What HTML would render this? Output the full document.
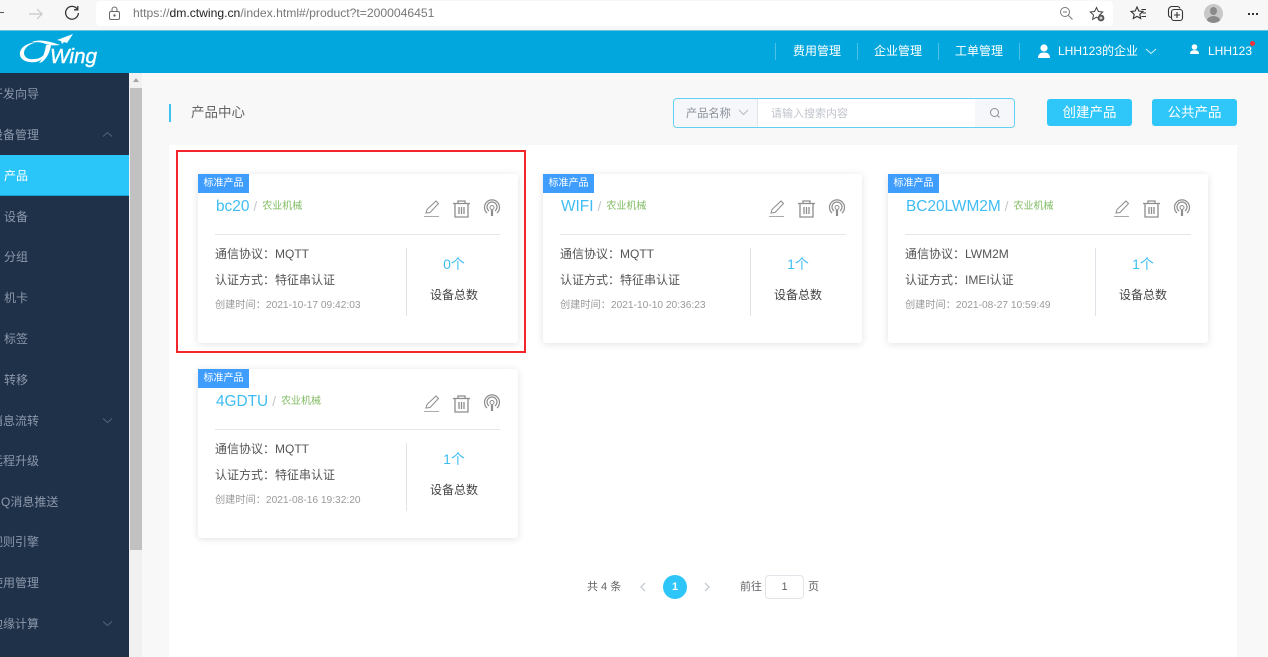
<!DOCTYPE html>
<html><head><meta charset="utf-8"><style>
*{box-sizing:border-box}
html,body{margin:0;padding:0;width:1268px;height:657px;overflow:hidden;background:#f8f8f8;font-family:"Liberation Sans","Noto Sans CJK SC",sans-serif}
.a{position:absolute;white-space:nowrap}
.nav{position:absolute;font-size:12px;color:#8d99ab;line-height:16px;white-space:nowrap}
.hd{position:absolute;top:44px;font-size:12px;line-height:15px;color:#fff;white-space:nowrap}
.sep{position:absolute;top:43px;width:1px;height:17px;background:#4dc0e6}
.card{position:absolute;width:320px;height:169px;background:#fff;border-radius:3px;box-shadow:0 1px 8px rgba(0,0,0,.12)}
.tag{position:absolute;left:0;top:0;width:51px;height:19px;background:#3f9dfd;color:#fff;font-size:10px;line-height:19px;text-align:center}
.ti{position:absolute;left:18px;top:22px;font-size:15.4px;line-height:20px;color:#3fbdf3;white-space:nowrap}
.sl{color:#c4c8cc;margin:0 5px 0 4px;font-size:14px}
.cat{font-size:10px;color:#80bb62;position:relative;top:-2px}
.dv{position:absolute;left:17px;top:60px;width:285px;height:1px;background:#e4e6ea}
.l1,.l2,.l3{position:absolute;left:17px;white-space:nowrap}
.l1{top:72px;font-size:12px;line-height:16px;color:#555}
.l2{top:98px;font-size:12px;line-height:16px;color:#555}
.l3{top:125px;font-size:10.2px;line-height:14px;color:#9a9a9a}
.vl{position:absolute;left:208px;top:74px;width:1px;height:68px;background:#e0e3e8}
.n{position:absolute;left:209px;width:94px;top:82px;text-align:center;font-size:14px;line-height:16px;color:#3fbdf3}
.t{position:absolute;left:209px;width:94px;top:113px;text-align:center;font-size:12px;line-height:16px;color:#444}
.ic{position:absolute;left:225px;top:25px}
</style></head><body>

<!-- browser bar -->
<div class="a" style="left:0;top:0;width:1268px;height:30px;background:#f7f7f7"></div>
<div class="a" style="left:0;top:12px;width:4px;height:1px;background:#555"></div>
<svg class="a" style="left:27px;top:5px" width="18" height="18" fill="none" stroke="#c9c9c9" stroke-width="1.2"><path d="M2 9h13M10 4l5 5-5 5"/></svg>
<svg class="a" style="left:63px;top:4px" width="18" height="18" fill="none" stroke="#333" stroke-width="1.3"><path d="M14.5 5.5A6.4 6.4 0 1 0 15.4 9M14.8 2v3.8H11"/></svg>
<div class="a" style="left:96px;top:1px;width:1017px;height:25px;background:#fff;border-radius:4px"></div>
<svg class="a" style="left:108px;top:6px" width="13" height="15" fill="none" stroke="#666" stroke-width="1"><rect x="1.5" y="5.5" width="10" height="8" rx="1.5"/><path d="M4 5.5V3.5a2.5 2.5 0 0 1 5 0v2"/><circle cx="6.5" cy="9.5" r=".7" fill="#666"/></svg>
<div class="a" style="left:133px;top:6px;font-size:12.15px;line-height:15px;color:#777">https://<span style="color:#222">dm.ctwing.cn</span>/index.html#/product?t=2000046451</div>
<svg class="a" style="left:1059px;top:6px" width="15" height="15" fill="none" stroke="#777" stroke-width="1"><circle cx="6" cy="6" r="4.5"/><path d="M9.5 9.5l4 4M4 6h4"/></svg>
<svg class="a" style="left:1089px;top:6px" width="17" height="17" fill="none" stroke="#444" stroke-width="1"><path d="M7.5 1.5l1.9 4 4.3.5-3.2 3 .8 4.3-3.8-2.1-3.8 2.1.8-4.3-3.2-3 4.3-.5z"/><circle cx="12" cy="12" r="3.4" fill="#555" stroke="none"/><path d="M10.5 12h3M12 10.5v3" stroke="#fff"/></svg>
<svg class="a" style="left:1130px;top:5px" width="17" height="17" fill="none" stroke="#333" stroke-width="1.1"><path d="M7 2l1.800 4 4.200.4-3.200 2.900.9 4.200L7 11.400 3.300 13.500l.9-4.200L1 6.400 5.200 6z"/><path d="M11.500 4.500H16M12.500 8H16M11.500 11.500H16"/></svg>
<svg class="a" style="left:1167px;top:5px" width="18" height="18" fill="none" stroke="#333" stroke-width="1.1"><path d="M4 12.500C2 12 1.500 11 1.500 9.500V5c0-2 1.500-3.500 3.500-3.500h5c1.500 0 2.500.5 3 2"/><rect x="4.500" y="4.500" width="11" height="11" rx="2.500"/><path d="M10 7v6M7 10h6"/></svg>
<div class="a" style="left:1204px;top:4px;width:19px;height:19px;border-radius:50%;background:#c8c8c8;overflow:hidden"><div class="a" style="left:6px;top:3px;width:7px;height:8px;border-radius:50%;background:#8a8a8a"></div><div class="a" style="left:3px;top:12px;width:13px;height:9px;border-radius:50%;background:#8a8a8a"></div></div>
<div class="a" style="left:1248px;top:13px;width:2px;height:2px;background:#333;box-shadow:4px 0 #333,8px 0 #333"></div>

<!-- header -->
<div class="a" style="left:0;top:30px;width:1268px;height:43px;background:#02a8dd;border-top:1px solid #6cc3df"></div>
<svg class="a" style="left:15px;top:30px" width="90" height="42">
<path d="M22 12C10 13 4 19 5 25c1 6 9 8 16 7 5-1 8-5 10-10-3 5-7 7-12 7-6 1-10-2-10-6 0-5 5-9 13-11z" fill="#fff"/>
<path d="M17 12c7-3 17-1 28 3-7 1-12 0-17-2-4-1-8-1-11-1z" fill="#fff"/>
<path d="M31 15h5c-1 7-4 13-9 17l-3 1c4-5 6-11 7-18z" fill="#fff"/>
<path d="M58 4L42 10l4 1 1 3 2-2 3 1z" fill="#fff"/>
<text x="35" y="33" font-family="Liberation Sans" font-style="italic" font-size="20" fill="#fff" stroke="#fff" stroke-width=".4" textLength="47" lengthAdjust="spacingAndGlyphs">Wing</text>
</svg>
<div class="sep" style="left:775px"></div><div class="sep" style="left:857px"></div><div class="sep" style="left:938px"></div><div class="sep" style="left:1019px"></div>
<div class="hd" style="left:793px">费用管理</div>
<div class="hd" style="left:874px">企业管理</div>
<div class="hd" style="left:955px">工单管理</div>
<svg class="a" style="left:1037px;top:44px" width="14" height="15" fill="#fff"><circle cx="7" cy="4" r="3.600"/><path d="M1 14c0-4 2.500-5.500 6-5.500S13 10 13 14z"/></svg>
<div class="hd" style="left:1058px">LHH123的企业</div>
<svg class="a" style="left:1145px;top:48px" width="12" height="7" fill="none" stroke="#d8f1fa" stroke-width="1"><path d="M1 1l5 4.500L11 1"/></svg>
<svg class="a" style="left:1189px;top:44px" width="11" height="11" fill="#fff"><circle cx="5.500" cy="3" r="2.800"/><path d="M1 10c0-3 2-3.700 4.500-3.700S10 7 10 10z"/></svg>
<div class="hd" style="left:1208px">LHH123</div>
<div class="a" style="left:1250px;top:41px;width:5px;height:5px;border-radius:50%;background:#f0313a"></div>

<!-- sidebar -->
<div class="a" style="left:0;top:73px;width:129px;height:584px;background:#1f3049"></div>
<div class="a" style="left:0;top:155px;width:129px;height:41px;background:#2ac6fa;border-bottom:1px solid #1b9fd0"></div>
<div class="nav" style="left:-9px;top:86px">开发向导</div>
<div class="nav" style="left:-9px;top:127px">设备管理</div>
<svg class="a" style="left:102px;top:131px" width="11" height="7" fill="none" stroke="#55627a" stroke-width="1"><path d="M1 5.500L5.500 1.500 10 5.500"/></svg>
<div class="nav" style="left:4px;top:168px;color:#fff">产品</div>
<div class="nav" style="left:4px;top:209px">设备</div>
<div class="nav" style="left:4px;top:249px">分组</div>
<div class="nav" style="left:4px;top:290px">机卡</div>
<div class="nav" style="left:4px;top:331px">标签</div>
<div class="nav" style="left:4px;top:372px">转移</div>
<div class="nav" style="left:-9px;top:413px">消息流转</div>
<svg class="a" style="left:102px;top:417px" width="11" height="7" fill="none" stroke="#55627a" stroke-width="1"><path d="M1 1.500L5.500 5.500 10 1.500"/></svg>
<div class="nav" style="left:-9px;top:453px">远程升级</div>
<div class="nav" style="left:-9px;top:494px">MQ消息推送</div>
<div class="nav" style="left:-9px;top:534px">规则引擎</div>
<div class="nav" style="left:-9px;top:575px">使用管理</div>
<div class="nav" style="left:-9px;top:616px">边缘计算</div>
<svg class="a" style="left:102px;top:620px" width="11" height="7" fill="none" stroke="#55627a" stroke-width="1"><path d="M1 1.500L5.500 5.500 10 1.500"/></svg>

<!-- scrollbar -->
<div class="a" style="left:129px;top:73px;width:13px;height:584px;background:#f1f1f1"></div>
<div class="a" style="left:130px;top:88px;width:12px;height:462px;background:#c1c1c1"></div>
<div class="a" style="left:133px;top:78px;width:0;height:0;border-left:3px solid transparent;border-right:3px solid transparent;border-bottom:4px solid #a3a3a3"></div>

<!-- title row -->
<div class="a" style="left:169px;top:104px;width:2px;height:18px;background:#3cc3f0"></div>
<div class="a" style="left:191px;top:105px;font-size:13.500px;line-height:16px;color:#666">产品中心</div>
<div class="a" style="left:673px;top:98px;width:342px;height:30px;background:#fff;border:1px solid #63cff3;border-radius:4px;overflow:hidden">
 <div class="a" style="left:0;top:0;width:84px;height:28px;background:#f5f7fa;border-right:1px solid #e2e5ea"></div>
 <div class="a" style="left:301px;top:0;width:40px;height:28px;background:#f5f7fa"></div>
 <div class="a" style="left:12px;top:8px;font-size:11.2px;line-height:14px;color:#8a8f99">产品名称</div>
 <svg class="a" style="left:64px;top:10px" width="11" height="7" fill="none" stroke="#b6bac2" stroke-width="1"><path d="M1 1l4.500 4.500L10 1"/></svg>
 <div class="a" style="left:97px;top:8px;font-size:11px;line-height:14px;color:#c0c4cc">请输入搜索内容</div>
 <svg class="a" style="left:315px;top:8px" width="12" height="12" fill="none" stroke="#8b8f96" stroke-width="1"><circle cx="5.500" cy="5.500" r="4"/><path d="M8.500 8.500l2 2"/></svg>
</div>
<div class="a" style="left:1047px;top:99px;width:85px;height:27px;background:#2fc6fa;border-radius:3px;color:#fff;font-size:13.500px;line-height:27px;text-align:center">创建产品</div>
<div class="a" style="left:1152px;top:99px;width:85px;height:27px;background:#2fc6fa;border-radius:3px;color:#fff;font-size:13.500px;line-height:27px;text-align:center">公共产品</div>

<!-- panel -->
<div class="a" style="left:169px;top:145px;width:1068px;height:512px;background:#fff"></div>
<div class="a" style="left:176px;top:150px;width:350px;height:203px;border:2px solid #f2262b"></div>

<!-- cards -->
<div class="card" style="left:198px;top:174px">
 <div class="tag">标准产品</div><div class="ti">bc20<span class="sl">/</span><span class="cat">农业机械</span></div>
 <svg class="ic" width="80" height="22" fill="none" stroke="#8d8d8d" stroke-width="1"><path d="M3 14l1-3.500L13 2l2.500 2.500L7 13.500z"/><path d="M1 17.500h15" stroke="#aaa"/><path d="M30 4.500h17M35 4V2h7v2M32 5v13h13V5M36 8v7M38.500 8v7M41 8v7" stroke-width="1.300"/><path d="M64 14a7.500 7.500 0 1 1 10 0M66 12a5 5 0 1 1 6 0" stroke-width="1.200"/><circle cx="69" cy="8.500" r="2"/><path d="M69 11v6" stroke-width="2.200"/></svg>
 <div class="dv"></div>
 <div class="l1">通信协议：MQTT</div><div class="l2">认证方式：特征串认证</div><div class="l3">创建时间：2021-10-17 09:42:03</div>
 <div class="vl"></div><div class="n">0个</div><div class="t">设备总数</div>
</div>
<div class="card" style="left:543px;top:174px;width:319px">
 <div class="tag">标准产品</div><div class="ti">WIFI<span class="sl">/</span><span class="cat">农业机械</span></div>
 <svg class="ic" width="80" height="22" fill="none" stroke="#8d8d8d" stroke-width="1"><path d="M3 14l1-3.500L13 2l2.500 2.500L7 13.500z"/><path d="M1 17.500h15" stroke="#aaa"/><path d="M30 4.500h17M35 4V2h7v2M32 5v13h13V5M36 8v7M38.500 8v7M41 8v7" stroke-width="1.300"/><path d="M64 14a7.500 7.500 0 1 1 10 0M66 12a5 5 0 1 1 6 0" stroke-width="1.200"/><circle cx="69" cy="8.500" r="2"/><path d="M69 11v6" stroke-width="2.200"/></svg>
 <div class="dv" style="width:286px"></div>
 <div class="l1">通信协议：MQTT</div><div class="l2">认证方式：特征串认证</div><div class="l3">创建时间：2021-10-10 20:36:23</div>
 <div class="vl" style="left:207px"></div><div class="n" style="left:208px">1个</div><div class="t" style="left:208px">设备总数</div>
</div>
<div class="card" style="left:888px;top:174px">
 <div class="tag">标准产品</div><div class="ti">BC20LWM2M<span class="sl">/</span><span class="cat">农业机械</span></div>
 <svg class="ic" width="80" height="22" fill="none" stroke="#8d8d8d" stroke-width="1"><path d="M3 14l1-3.500L13 2l2.500 2.500L7 13.500z"/><path d="M1 17.500h15" stroke="#aaa"/><path d="M30 4.500h17M35 4V2h7v2M32 5v13h13V5M36 8v7M38.500 8v7M41 8v7" stroke-width="1.300"/><path d="M64 14a7.500 7.500 0 1 1 10 0M66 12a5 5 0 1 1 6 0" stroke-width="1.200"/><circle cx="69" cy="8.500" r="2"/><path d="M69 11v6" stroke-width="2.200"/></svg>
 <div class="dv" style="width:286px"></div>
 <div class="l1">通信协议：LWM2M</div><div class="l2">认证方式：IMEI认证</div><div class="l3">创建时间：2021-08-27 10:59:49</div>
 <div class="vl" style="left:207px"></div><div class="n" style="left:208px">1个</div><div class="t" style="left:208px">设备总数</div>
</div>
<div class="card" style="left:198px;top:369px">
 <div class="tag">标准产品</div><div class="ti">4GDTU<span class="sl">/</span><span class="cat">农业机械</span></div>
 <svg class="ic" width="80" height="22" fill="none" stroke="#8d8d8d" stroke-width="1"><path d="M3 14l1-3.500L13 2l2.500 2.500L7 13.500z"/><path d="M1 17.500h15" stroke="#aaa"/><path d="M30 4.500h17M35 4V2h7v2M32 5v13h13V5M36 8v7M38.500 8v7M41 8v7" stroke-width="1.300"/><path d="M64 14a7.500 7.500 0 1 1 10 0M66 12a5 5 0 1 1 6 0" stroke-width="1.200"/><circle cx="69" cy="8.500" r="2"/><path d="M69 11v6" stroke-width="2.200"/></svg>
 <div class="dv"></div>
 <div class="l1">通信协议：MQTT</div><div class="l2">认证方式：特征串认证</div><div class="l3">创建时间：2021-08-16 19:32:20</div>
 <div class="vl"></div><div class="n">1个</div><div class="t">设备总数</div>
</div>

<!-- pagination -->
<div class="a" style="left:587px;top:580px;font-size:11px;line-height:15px;color:#606266">共 4 条</div>
<svg class="a" style="left:639px;top:582px" width="8" height="10" fill="none" stroke="#c0c4cc" stroke-width="1.200"><path d="M6 1L2 5l4 4"/></svg>
<div class="a" style="left:663px;top:575px;width:24px;height:24px;border-radius:50%;background:#2ec5f8;color:#fff;font-size:11px;font-weight:bold;line-height:24px;text-align:center">1</div>
<svg class="a" style="left:703px;top:582px" width="8" height="10" fill="none" stroke="#c0c4cc" stroke-width="1.200"><path d="M2 1l4 4-4 4"/></svg>
<div class="a" style="left:740px;top:580px;font-size:11px;line-height:15px;color:#606266">前往</div>
<div class="a" style="left:765px;top:575px;width:39px;height:24px;border:1px solid #e2e4ea;border-radius:4px;font-size:11px;line-height:22px;text-align:center;color:#606266">1</div>
<div class="a" style="left:808px;top:580px;font-size:11px;line-height:15px;color:#606266">页</div>
</body></html>
